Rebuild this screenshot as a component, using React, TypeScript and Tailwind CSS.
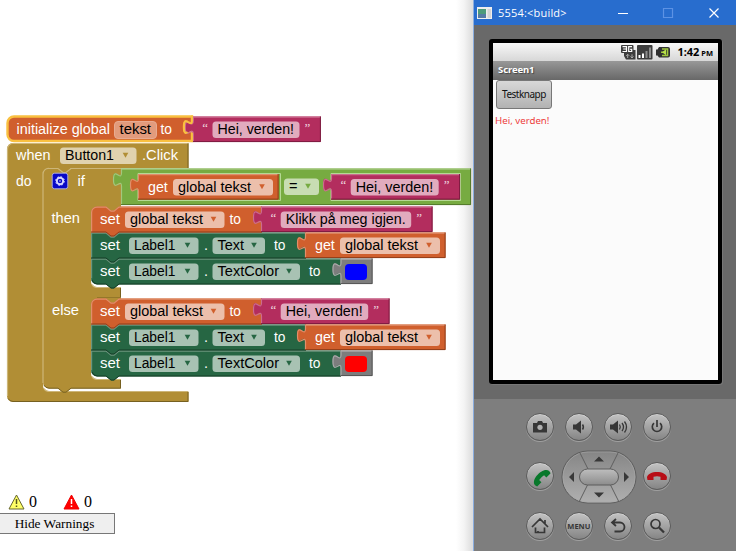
import React from "react";

const TAB = "v4 c0,9 -8,-7 -8,6.5 s8,-2 8,6.5";
const SANS = "font-['Liberation_Sans',Arial,sans-serif]";

type Tone = { fill: string; light: string; dark: string };
const ORANGE: Tone = { fill: "#d05f2d", light: "#e08f6c", dark: "#8f3d19" };
const PINK: Tone = { fill: "#b32d5e", light: "#cb6c8e", dark: "#7c1b3f" };
const GREEN: Tone = { fill: "#266643", light: "#6c957e", dark: "#153d27" };
const LIME: Tone = { fill: "#77ab41", light: "#a3c77e", dark: "#52782b" };
const GRAY: Tone = { fill: "#7d7d7d", light: "#a8a8a8", dark: "#545454" };
const GOLD: Tone = { fill: "#b18e35", light: "#cdb678", dark: "#766020" };

function Label({ x, y, w, children, dark }: { x: number; y: number; w: number; children: string; dark?: boolean }) {
  return (
    <text x={x} y={y} textLength={w} lengthAdjust="spacingAndGlyphs" fontSize="14.67" fill={dark ? "#000" : "#fff"}>
      {children}
    </text>
  );
}

function Chip({ x, y, w, text, tw, arrow, tint = 0.6 }: { x: number; y: number; w: number; text: string; tw: number; arrow?: string; tint?: number }) {
  return (
    <g>
      <rect x={x} y={y} width={w} height="16.5" rx="3.5" fill="#fff" fillOpacity={tint} />
      <Label x={x + 5} y={y + 12.8} w={tw} dark>{text}</Label>
      {arrow && <path d={`M${x + w - 13.8} ${y + 5.2}h5.600l-2.800 5z`} fill={arrow} />}
    </g>
  );
}

/* A value block: rectangle with a plug on its left side. */
function Value({ x, y, w, h = 25.5, tone, children }: { x: number; y: number; w: number; h?: number; tone: Tone; children?: React.ReactNode }) {
  return (
    <g>
      <path d={`M${x} ${y}${TAB}V${y + h}h${w}V${y}z`} fill={tone.fill} />
      <path d={`M${x + w} ${y + 0.6}H${x + 0.5}${TAB}V${y + h}`} fill="none" stroke={tone.light} strokeWidth="1.2" />
      <path d={`M${x} ${y + h - 0.4}H${x + w - 0.4}V${y}`} fill="none" stroke={tone.dark} />
      {children}
    </g>
  );
}

function Quoted({ x, y, text, tw }: { x: number; y: number; text: string; tw: number }) {
  return (
    <Value x={x} y={y} w={tw + 51.5} tone={PINK}>
      <text x={x + 9.5} y={y + 15} fontSize="13" fill="#fff" fillOpacity="0.8" className="font-['Liberation_Serif',serif]">“</text>
      <Chip x={x + 19.7} y={y + 5} w={tw + 10.5} text={text} tw={tw} />
      <text x={x + tw + 35.3} y={y + 15} fontSize="13" fill="#fff" fillOpacity="0.8" className="font-['Liberation_Serif',serif]">”</text>
    </Value>
  );
}

function Getter({ x, y }: { x: number; y: number }) {
  return (
    <Value x={x} y={y} w={140.5} tone={ORANGE}>
      <Label x={x + 10} y={y + 17.5} w={19.8}>get</Label>
      <Chip x={x + 35} y={y + 5} w={100} text="global tekst" tw={73} arrow="#d05f2d" />
    </Value>
  );
}

/* A statement block; the first has a round top corner, the last a round bottom one. */
function Statement({ y, right, tone, first, last, children }: { y: number; right: number; tone: Tone; first?: boolean; last?: boolean; children?: React.ReactNode }) {
  const b = y + 26;
  const top = first ? `M91 ${y + 6}a6 6 0 0 1 6 -6` : `M91 ${y}`;
  const low = last ? `H97a6 6 0 0 1 -6 -6` : "H91";
  return (
    <g>
      {first && <path d={`M91 ${y - 1}H121V${y + 1}L114 ${y + 5}h-4L104 ${y + 1}H95L91 ${y + 6}z`} fill={GOLD.fill} />}
      <path d={`${top}H106l5 4h3l5 -4H${right}V${b}H119l-5 4h-3l-5 -4${low}z`} fill={tone.fill} />
      <path d={`M91.6 ${last ? b - 6 : b}V${first ? y + 6 : y + 0.6}${first ? "a5.4 5.4 0 0 1 5.4 -5.4" : ""}H106l5 4h3l5 -4H${right}`} fill="none" stroke={tone.light} strokeWidth="1.2" />
      <path d={`M${right} ${b - 0.5}H119l-5 4h-3l-5 -4${last ? "H97a6 6 0 0 1 -5 -4" : "H91"}`} fill="none" stroke={tone.dark} />
      <Label x={100} y={y + 17.5} w={20}>set</Label>
      {children}
    </g>
  );
}

function Branch({ y, text, tw, color }: { y: number; text: string; tw: number; color: string }) {
  return (
    <g>
      <Statement y={y + 52} right={341} tone={GREEN} last>
        <Chip x={129} y={y + 57} w={69.5} text="Label1" tw={41.5} arrow="#266643" />
        <Label x={204} y={y + 69.5} w={4}>.</Label>
        <Chip x={212.5} y={y + 57} w={87.5} text="TextColor" tw={61.5} arrow="#266643" />
        <Label x={309} y={y + 69.5} w={11.5}>to</Label>
        <Value x={340.5} y={y + 52} w={32} tone={GRAY}>
          <rect x="345" y={y + 57.5} width="22" height="16" rx="4" fill={color} />
        </Value>
      </Statement>
      <Statement y={y + 26} right={306} tone={GREEN}>
        <Chip x={129} y={y + 31} w={69.5} text="Label1" tw={41.5} arrow="#266643" />
        <Label x={204} y={y + 43.5} w={4}>.</Label>
        <Chip x={212.5} y={y + 31} w={52.5} text="Text" tw={26.5} arrow="#266643" />
        <Label x={274} y={y + 43.5} w={11.5}>to</Label>
        <Getter x={305} y={y + 26} />
      </Statement>
      <Statement y={y} right={262} tone={ORANGE} first>
        <Chip x={125} y={y + 5} w={99.5} text="global tekst" tw={73} arrow="#d05f2d" />
        <Label x={229.5} y={y + 17.5} w={11.5}>to</Label>
        <Quoted x={261} y={y} text={text} tw={tw} />
      </Statement>
    </g>
  );
}

function Blocks() {
  return (
    <svg width="473" height="490" viewBox="0 0 473 490" className={`block shrink-0 ${SANS}`}>
      {/* event handler */}
      <path d="M7 149a6 6 0 0 1 6 -6H188.500V168H71l-5 5h-3l-5 -4H49a6 6 0 0 0 -6 6V385a6 6 0 0 0 6 6.500H188.500V402H13a6 6 0 0 1 -6 -6z" fill={GOLD.fill} />
      <path d="M7.500 396V149a5.500 5.500 0 0 1 5.500 -5.500H188M44 388.500q1.500 3 5 3H188" fill="none" stroke={GOLD.light} strokeWidth="1.2" />
      <path d="M188 143.500V168M188 392V401.500H13a6 6 0 0 1 -5 -3" fill="none" stroke={GOLD.dark} />
      <Label x={16} y={160} w={34.500}>when</Label>
      <Chip x={60} y={147.500} w={76.500} text="Button1" tw={49} arrow="#b18e35" />
      <Label x={142} y={160} w={36}>.Click</Label>
      <Label x={16} y={185.500} w={15.500}>do</Label>

      {/* conditional */}
      <path d="M43 174a6 6 0 0 1 6 -6H58l5 4h3l5 -4H121V206H97a6 6 0 0 0 -6 6V281a6 6 0 0 0 6 6.500H121V298H97a6 6 0 0 0 -6 6V373a6 6 0 0 0 6 6.500H121V388.500H71l-5 4h-3l-5 -4H49a6 6 0 0 1 -6 -6z" fill={GOLD.fill} />
      <path d="M43 383V174a5.500 5.500 0 0 1 6 -5.500H58l5 4h3l5 -4H121M92 284.500q1.500 3 5 3H121M92 376.500q1.500 3 5 3H121" fill="none" stroke={GOLD.light} strokeWidth="1.2" />
      <path d="M120.500 288V297.500H97M120.500 380V388.200H71l-5 4h-3l-5 -4H49a6 6 0 0 1 -5 -3" fill="none" stroke={GOLD.dark} />
      <rect x="52.200" y="173.200" width="15.600" height="15.600" rx="2.500" fill="#0808c8" stroke="#a8a8de" />
      <circle cx="60" cy="181" r="3.200" fill="none" stroke="#d5d5ff" strokeWidth="1.900" />
      <circle cx="60" cy="181" r="4.400" fill="none" stroke="#d5d5ff" strokeWidth="0.900" strokeDasharray="1.700 1.756" />
      <circle cx="60" cy="181" r="0.800" fill="#d5d5ff" />
      <Label x={77.500} y={185.500} w={7.500}>if</Label>
      <Label x={51.500} y={223} w={28.500}>then</Label>
      <Label x={52} y={315} w={27}>else</Label>

      <Value x={121} y={168.500} w={350} h={36.500} tone={LIME}>
        <path d="M138 173.500H280.500V200.500H138zM331 173.500H460.500V200.500H331z" fill="none" stroke="#b5d894" />
        <Getter x={138} y={174} />
        <Chip x={284} y={178.500} w={35} text="=" tw={8.500} arrow="#77ab41" />
        <Quoted x={331} y={174} text="Hei, verden!" tw={77.500} />
      </Value>
      <Branch y={206.500} text="Klikk på meg igjen." tw={120} color="#00f" />
      <Branch y={298.500} text="Hei, verden!" tw={77} color="#f00" />

      {/* selected global declaration */}
      <path d={`M192 116.500${TAB}V141H14a6.500 6.500 0 0 1 -6.500 -6.500V123a6.500 6.500 0 0 1 6.500 -6.500z`} fill={ORANGE.fill} stroke="#f9c040" strokeWidth="2.400" />
      <Label x={16.500} y={134} w={93.500}>initialize global</Label>
      <rect x="114.500" y="121.500" width="42" height="17" rx="3.500" fill="#e29b7c" stroke="#e8ab91" />
      <Label x={119.500} y={134} w={31.500} dark>tekst</Label>
      <Label x={160.500} y={134} w={11.500}>to</Label>
      <Quoted x={192.800} y={116.500} text="Hei, verden!" tw={76.500} />
      <path d="M192 115.500v5c0,9 -8,-7 -8,6.500c0 6 1.500 6.500 3.500 5" fill="none" stroke="#f9c040" strokeWidth="1.900" />
      <path d="M192 133v9" stroke="#f9c040" strokeWidth="1.700" />
    </svg>
  );
}

function Warning({ fill, stroke, mark }: { fill: string; stroke: string; mark: string }) {
  return (
    <svg width="17" height="16" viewBox="0 0 17 16">
      <path d="M8.500 1L16 15H1z" fill={fill} stroke={stroke} strokeLinejoin="round" />
      <path d="M8.500 5v5M8.500 11.500v1.500" stroke={mark} strokeWidth="1.5" />
    </svg>
  );
}

function Workspace() {
  return (
    <main className="flex w-[473px] shrink-0 flex-col bg-[linear-gradient(90deg,#fff_456px,#f4f4f4_464px,#dedede_472px)]">
      <Blocks />
      <div className="flex h-[23px] items-center pl-2 font-['Liberation_Serif',serif] text-[16px] text-black">
        <Warning fill="#ffff66" stroke="#66662c" mark="#55551c" />
        <span className="ml-1 w-[34px]">0</span>
        <Warning fill="#ff0000" stroke="#f00000" mark="#ffffff" />
        <span className="ml-1">0</span>
      </div>
      <button className="-ml-px h-[21px] w-[116px] border border-[#777] bg-[#efefef] pr-[5px] text-center font-['Liberation_Serif',serif] text-[13.33px] leading-[19px] text-black">
        Hide Warnings
      </button>
    </main>
  );
}

function Key({ children }: { children: React.ReactNode }) {
  return (
    <button className="flex size-[28px] items-center justify-center rounded-full border border-[#5c5c5c] bg-linear-to-b from-[#c3c3c3] to-[#858585] shadow-[0_1px_0_#a0a0a0,inset_0_1px_0_#d0d0d0]">
      {children}
    </button>
  );
}

function Glyph({ children, color = "#373737" }: { children: React.ReactNode; color?: string }) {
  return (
    <svg width="24" height="24" viewBox="0 0 24 24" fill="none" stroke={color} strokeWidth="2" className="shrink-0">
      {children}
    </svg>
  );
}

const HANDSET = "M2 13.500C2.500 6 21.500 6 22 13.500L21.500 16H15.500V12.800Q12 11.800 8.500 12.800V16H2.500Z";

function DirectionPad() {
  return (
    <svg width="76" height="54" viewBox="0 0 76 54">
      <defs>
        <linearGradient id="pad" x2="0" y2="1"><stop stopColor="#858585" /><stop offset="1" stopColor="#b0b0b0" /></linearGradient>
        <linearGradient id="center" x2="0" y2="1"><stop stopColor="#bebebe" /><stop offset="1" stopColor="#8c8c8c" /></linearGradient>
      </defs>
      <rect x="1" y="1" width="74" height="52" rx="26" fill="url(#pad)" stroke="#5c5c5c" />
      <rect x="2" y="2" width="72" height="50" rx="25" fill="none" stroke="#a8a8a8" strokeOpacity=".6" />
      <path d="M19 3l8 16M57 3l-8 16M18.500 51l8 -16M57.500 51l-8 -16" stroke="#5f5f5f" />
      <rect x="18.500" y="19" width="39" height="16" rx="8" fill="url(#center)" stroke="#5c5c5c" />
      <path d="M33 11.500l5 -5 5 5zM33 42.500l5 5 5 -5zM13 22v10l-5 -5zM63 22v10l5 -5z" fill="#383838" />
    </svg>
  );
}

function Keypad() {
  return (
    <div className="grid h-[149px] w-[157px] grid-cols-4 grid-rows-3 place-items-center">
      <Key><Glyph><path d="M5 8h4l1-2h4l1 2h4v9.500H5z" fill="#373737" stroke="none" /><circle cx="12" cy="12.300" r="2.600" fill="#b0b0b0" stroke="none" /></Glyph></Key>
      <Key><Glyph><path d="M6 9.500h3l5-4v13l-5-4H6z" fill="#373737" stroke="none" /><path d="M15.500 9.500q1.800 2.500 0 5" strokeWidth="1.500" /></Glyph></Key>
      <Key><Glyph><path d="M4 9.500h3l5-4v13l-5-4H4z" fill="#373737" stroke="none" /><path d="M13.500 9.500q1.600 2.500 0 5M16 8q3 4 0 8M18.500 6.500q4 5.500 0 11" strokeWidth="1.300" /></Glyph></Key>
      <Key><Glyph><path d="M12 5v7M9 8.200a4.700 4.700 0 1 0 6 0" strokeWidth="1.700" /></Glyph></Key>
      <Key><Glyph><g transform="rotate(-45 12 12) translate(0 1.500)"><path d={HANDSET} fill="#08782b" stroke="none" /></g></Glyph></Key>
      <div className="col-span-2"><DirectionPad /></div>
      <Key><Glyph><path d={HANDSET} fill="#b80e17" stroke="none" /></Glyph></Key>
      <Key><Glyph><path d="M4 13l8-8 8 8M7.500 13.500v5H10v-1.500M16.500 13.500v5H10M17 6v4" strokeWidth="1.700" /></Glyph></Key>
      <Key><span className="font-['Open_Sans',sans-serif] text-[7.5px] font-bold text-[#373737]">MENU</span></Key>
      <Key><Glyph><path d="M10 5L6 8.500l4 3.500M6.500 8.500H14a4.500 4.500 0 0 1 0 9H8.500" strokeWidth="1.800" /></Glyph></Key>
      <Key><Glyph><circle cx="10.500" cy="10" r="4.500" strokeWidth="1.700" /><path d="M14 13.500l5 5" strokeWidth="2.300" /></Glyph></Key>
    </div>
  );
}

function StatusIcons() {
  return (
    <svg width="52" height="17" viewBox="0 0 52 17">
      <path d="M4 6h11.500v9.500H6L4 12z" fill="#3d3d3d" />
      <rect x="1" y="1" width="12.500" height="8" rx="1" fill="#3d3d3d" />
      <path d="M2.500 2.700h4v4.800h-4M3.200 5h3.300M12 2.700H8.700v4.800h3V5.300h-1.500" stroke="#fff" strokeWidth="1.200" fill="none" />
      <path d="M7.700 14V10.300M6.200 11.800l1.500-1.500 1.500 1.500M12 10.300v3.700M10.500 12.500l1.500 1.500 1.500-1.500" stroke="#aaa" fill="none" />
      <rect x="17" y="1" width="15.500" height="14.500" rx="1" fill="#3d3d3d" />
      <path d="M19.500 14v-3M23 14V9.500" stroke="#fff" strokeWidth="2" />
      <path d="M26.500 14V7M30 14V3.500" stroke="#8c8c8c" strokeWidth="2" />
      <path d="M39 3h9q2 0 2 2v6.500q0 2 -2 2H39l-1.500-2H36V5.500h1.500z" fill="#303030" />
      <path d="M42 5h5.500v6.500H42M41 8.300h5" stroke="#9dc63a" strokeWidth="1.600" fill="none" />
      <path d="M42 8.300l4-3v6z" fill="#b8e04a" />
    </svg>
  );
}

function Emulator() {
  return (
    <section className="flex w-[263px] shrink-0 flex-col border-b-2 border-l border-[#8badde] bg-[#696969]">
      <header className="flex h-[25px] shrink-0 items-center bg-[#286dce] pl-[3px] text-white">
        <svg width="15" height="12" viewBox="0 0 15 12" className="shrink-0">
          <rect width="15" height="12" fill="#eee" />
          <path d="M1 2h8v9H1z" fill="#4c9b7b" /><path d="M1 7h8v4H1z" fill="#557ba5" />
          <path d="M10.500 2h3.500v9h-3.500z" fill="#d5d5d5" />
        </svg>
        <h1 className="ml-[6px] w-[119px] font-['Open_Sans',sans-serif] text-[11px] leading-none tracking-[0.2px]">5554:&lt;build&gt;</h1>
        <svg width="104" height="12" viewBox="0 0 104 12" fill="none" stroke="#fff" strokeWidth="1.200">
          <path d="M1 6.500h10M92.500 1.500l9 9M101.500 1.500l-9 9" /><path d="M46.500 1.500h9v9h-9z" stroke="#5c92e4" />
        </svg>
      </header>
      <div className="h-[374px] shrink-0 pl-[15px] pt-[14px]">
        <div className="flex h-[345px] w-[233px] flex-col rounded-[3px] border-4 border-black bg-[#fbfbfb] font-['Noto_Sans',sans-serif] shadow-[1px_1px_0_#777]">
          <div className="flex h-[18px] shrink-0 items-center justify-end bg-linear-to-b from-[#f8f8f8] to-[#d7d7d7] pr-[5px] text-black">
            <StatusIcons />
            <span className="ml-[5px] whitespace-nowrap text-[11px] font-bold leading-none">1:42 <span className="-ml-px text-[7.5px]">PM</span></span>
          </div>
          <div className="h-[19px] shrink-0 bg-linear-to-b from-[#989898] to-[#686868] pl-[5px] text-[9.5px] font-bold leading-[17px] tracking-[-0.1px] text-white [text-shadow:1px_1px_1px_#444]">Screen1</div>
          <button className="ml-[3px] h-[29px] w-[56px] shrink-0 rounded-[3px] border border-[#777] bg-linear-to-b from-[#d8d8d8] to-[#b2b2b2] text-[10px] tracking-[-0.5px] text-[#111]">Testknapp</button>
          <p className="pl-[2px] pt-[5px] text-[9.700px] leading-[14px] text-[#ed3b3b]">Hei, verden!</p>
        </div>
      </div>
      <div className="flex grow justify-start bg-[#7e7e7e] pl-[46px] pt-[3px]"><Keypad /></div>
    </section>
  );
}

export default function App() {
  return (
    <div className="flex h-[551px] w-[736px] overflow-hidden bg-white">
      <Workspace />
      <Emulator />
    </div>
  );
}
